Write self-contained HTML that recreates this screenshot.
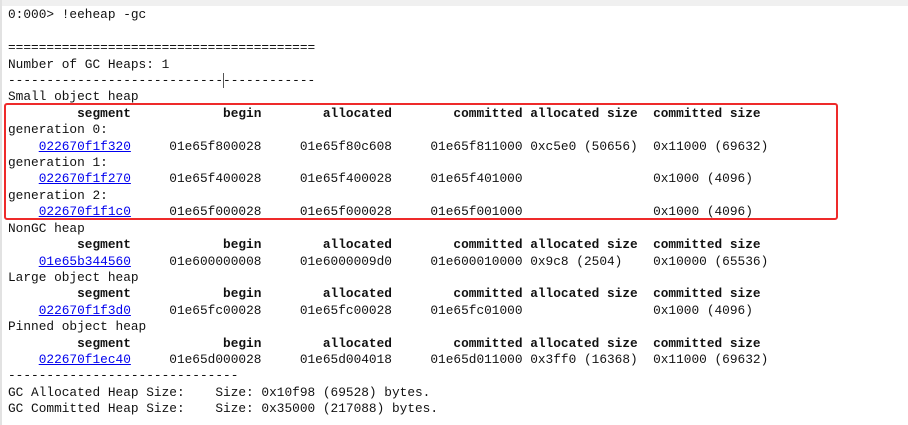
<!DOCTYPE html>
<html><head><meta charset="utf-8"><style>
html,body{margin:0;padding:0;width:908px;height:425px;overflow:hidden;background:#fff;}
.top{position:absolute;left:0;top:0;width:908px;height:6px;background:#f0f0f0;overflow:hidden;}
.lb{position:absolute;left:0;top:0;width:2px;height:425px;background:#e2e2e2;}
pre{position:absolute;left:8px;top:-9px;margin:0;font-family:"Liberation Mono",monospace;font-size:12.8px;line-height:16.4px;color:#111;}
b{font-weight:bold;}
a{color:#0000ee;text-decoration:underline;}
.box{position:absolute;left:4px;top:103px;width:830px;height:113px;border:2px solid #ee2a2a;border-radius:3px;}
.cur{position:absolute;left:223px;top:73px;width:1px;height:15px;background:#555;}
</style></head><body>
<pre><span style="color:#888">00007ffd 01b5e794 c3              ret</span>
0:000&gt; !eeheap -gc

========================================
Number of GC Heaps: 1
----------------------------------------
Small object heap
<b>         segment            begin        allocated        committed allocated size  committed size</b>
generation 0:
    <a>022670f1f320</a>     01e65f800028     01e65f80c608     01e65f811000 0xc5e0 (50656)  0x11000 (69632)
generation 1:
    <a>022670f1f270</a>     01e65f400028     01e65f400028     01e65f401000                 0x1000 (4096)
generation 2:
    <a>022670f1f1c0</a>     01e65f000028     01e65f000028     01e65f001000                 0x1000 (4096)
NonGC heap
<b>         segment            begin        allocated        committed allocated size  committed size</b>
    <a>01e65b344560</a>     01e600000008     01e6000009d0     01e600010000 0x9c8 (2504)    0x10000 (65536)
Large object heap
<b>         segment            begin        allocated        committed allocated size  committed size</b>
    <a>022670f1f3d0</a>     01e65fc00028     01e65fc00028     01e65fc01000                 0x1000 (4096)
Pinned object heap
<b>         segment            begin        allocated        committed allocated size  committed size</b>
    <a>022670f1ec40</a>     01e65d000028     01e65d004018     01e65d011000 0x3ff0 (16368)  0x11000 (69632)
------------------------------
GC Allocated Heap Size:    Size: 0x10f98 (69528) bytes.
GC Committed Heap Size:    Size: 0x35000 (217088) bytes.
</pre>
<div class="top"></div>
<div class="lb"></div>
<div class="cur"></div>
<div class="box"></div>
</body></html>
